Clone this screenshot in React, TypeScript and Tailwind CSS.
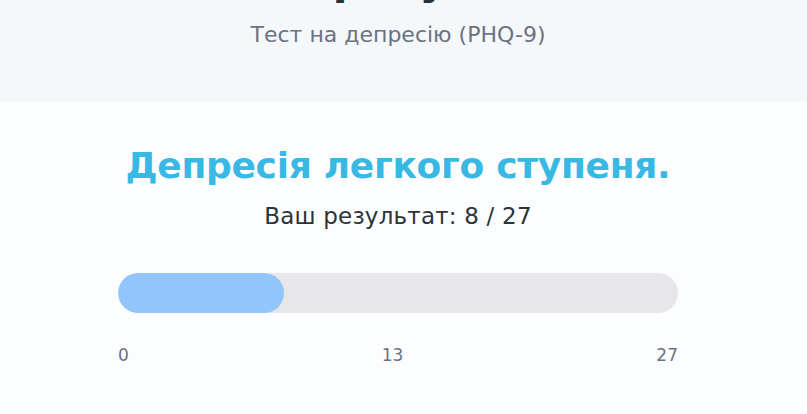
import React from 'react';

const score = 8;
const max = 27;

export default function App() {
  const pct = (score / max) * 100;

  return (
    <div className="min-h-[414px] bg-[#fcfdff] font-['DejaVu_Sans',sans-serif] overflow-hidden">
      {/* Header */}
      <div className="h-[102px] bg-[#f5f8fb] flex flex-col items-center pr-[11px]">
        <h1 className="-mt-[47px] text-[44px] leading-[52px] font-bold text-[#27353b]">
          Ваш результат
        </h1>
        <p className="mt-[15px] text-[22px] leading-[30px] text-[#6b7280]">
          Тест на депресію (PHQ-9)
        </p>
      </div>

      {/* Result */}
      <div className="flex flex-col items-center pt-[42px] pr-[11px]">
        <h2 className="text-[36px] leading-[44px] font-bold text-[#3ab8e4] tracking-[-0.3px]">
          Депресія легкого ступеня.
        </h2>
        <p className="mt-[13px] text-[23px] leading-[30px] text-[#2d3436] tracking-[0.2px]">
          Ваш результат: {score} / {max}
        </p>

        <div className="mt-[42px] w-[560px]">
          <div className="h-[40px] w-full rounded-full bg-[#e7e7ea] overflow-hidden">
            <div className="h-full rounded-full bg-[#93c5fd]" style={{ width: `${pct}%` }} />
          </div>
          <div className="mt-[32px] flex justify-between text-[17px] leading-[20px] text-[#6b7280]">
            <span>0</span>
            <span>13</span>
            <span>27</span>
          </div>
        </div>
      </div>
    </div>
  );
}
